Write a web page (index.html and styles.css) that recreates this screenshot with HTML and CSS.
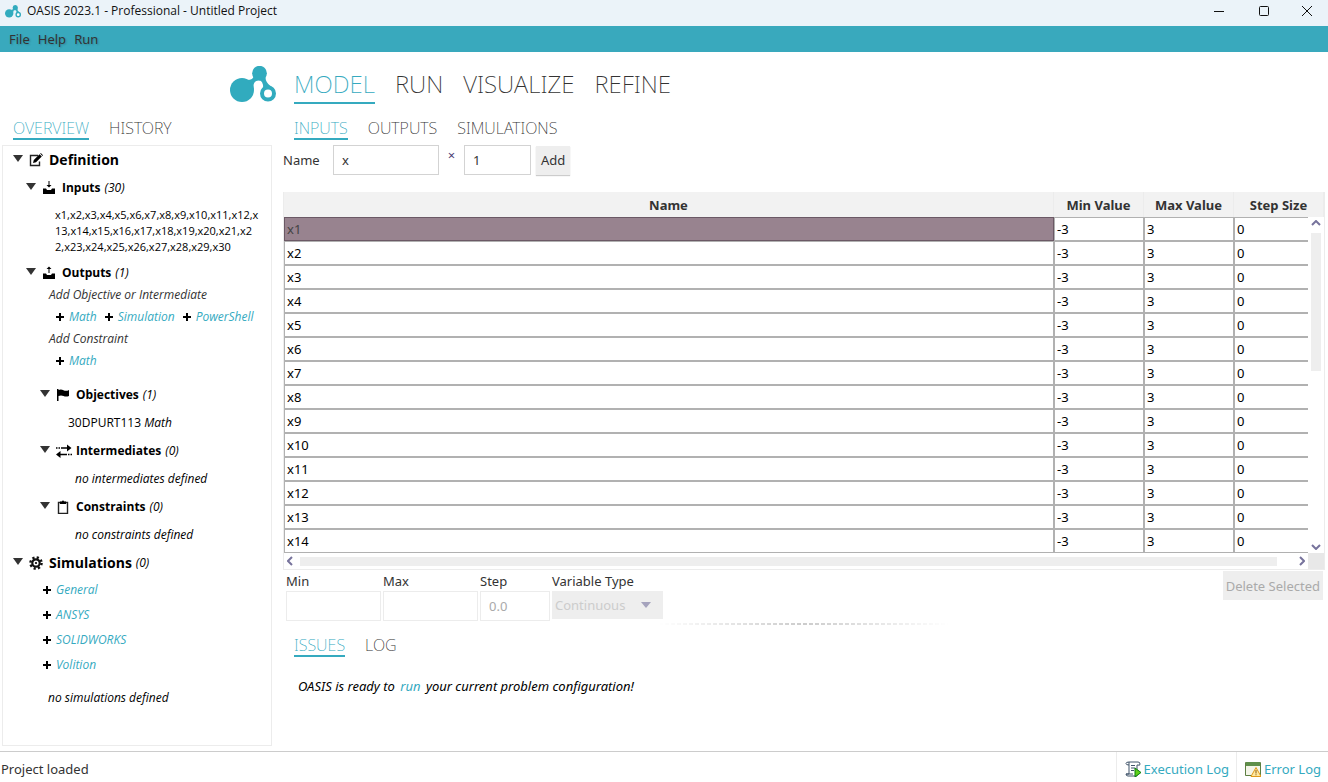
FILE: index.html
```html
<!DOCTYPE html>
<html lang="en">
<head>
  <meta charset="UTF-8">
  <title>OASIS 2023.1 - Professional - Untitled Project</title>
  <meta name="viewport" content="width=device-width, initial-scale=1.0">
  <link rel="stylesheet" href="styles.css">
</head>
<body>
  <svg class="defs" aria-hidden="true">
    <symbol id="logo" viewBox="0 0 46 37">
      <circle cx="12" cy="24" r="12"/>
      <circle cx="29.500" cy="7.200" r="7.400"/>
      <path d="M17 14 Q23.500 14 23.500 10 L35.500 10 Q35 16 41 20.500 L33 25 Q34 14 28.500 14.200 Q23 15 23.500 22z"/>
      <circle cx="38" cy="27.500" r="6" fill="#fff" stroke="currentColor" stroke-width="4"/>
    </symbol>
    <symbol id="plus" viewBox="0 0 8 8">
      <path d="M3 0h2v3h3v2H5v3H3V5H0V3h3z"/>
    </symbol>
  </svg>

  <div class="titlebar">
    <svg class="app-icon"><use href="#logo"/></svg>
    <span class="title">OASIS 2023.1 - Professional - Untitled Project</span>
    <button aria-label="Minimize"><svg viewBox="0 0 12 12"><path d="M1 6.500h10"/></svg></button>
    <button aria-label="Maximize"><svg viewBox="0 0 12 12"><rect x="1.500" y="1.500" width="9" height="9" rx="1"/></svg></button>
    <button aria-label="Close"><svg viewBox="0 0 12 12"><path d="M1 1l10 10M11 1L1 11"/></svg></button>
  </div>

  <nav class="menubar">
    <button>File</button>
    <button>Help</button>
    <button>Run</button>
  </nav>

  <header>
    <svg class="logo"><use href="#logo"/></svg>
    <nav class="steps">
      <a href="#model" class="active">MODEL</a>
      <a href="#run">RUN</a>
      <a href="#visualize">VISUALIZE</a>
      <a href="#refine">REFINE</a>
    </nav>
  </header>

  <div class="workspace">
    <aside>
      <nav class="tabs">
        <a href="#overview" class="active">OVERVIEW</a>
        <a href="#history">HISTORY</a>
      </nav>
      <div class="tree">
        <details open>
          <summary class="top">
            <svg viewBox="0 0 14 14"><path d="M9 2.500H1.500v10h9V8.500" fill="none" stroke="#222" stroke-width="1.400"/><path d="M4 10l.8-3L10.500 1.200l2.300 2.300L7 9.200zM11.200.6l.6-.5 2.200 2.200-.6.6z"/></svg>
            <b>Definition</b>
          </summary>
          <details class="level2" open>
            <summary>
              <svg viewBox="0 0 14 14"><path d="M6.500 0h1v4h2L7 6.500 4.500 4h2zM1 7.500h3l1 1.500h4l1-1.500h3V13H1z"/></svg>
              <b>Inputs</b> <i>(30)</i>
            </summary>
            <p class="vars">x1,x2,x3,x4,x5,x6,x7,x8,x9,x10,x11,x12,x<br>13,x14,x15,x16,x17,x18,x19,x20,x21,x2<br>2,x23,x24,x25,x26,x27,x28,x29,x30</p>
          </details>
          <details class="level2" open>
            <summary>
              <svg viewBox="0 0 14 14"><path d="M6.500 7h1V3h2L7 .5 4.500 3h2zM1 7.500h3l1 1.500h4l1-1.500h3V13H1z"/></svg>
              <b>Outputs</b> <i>(1)</i>
            </summary>
            <div class="add">
              <p>Add Objective or Intermediate</p>
              <div class="add-links">
                <a href="#"><svg><use href="#plus"/></svg>Math</a>
                <a href="#"><svg><use href="#plus"/></svg>Simulation</a>
                <a href="#"><svg><use href="#plus"/></svg>PowerShell</a>
              </div>
              <p>Add Constraint</p>
              <div class="add-links">
                <a href="#"><svg><use href="#plus"/></svg>Math</a>
              </div>
            </div>
            <details class="level3" open>
              <summary>
                <svg viewBox="0 0 14 14"><path d="M1 1h1.500v1Q5 .8 7.500 2.200T13 2v6Q10 9.200 7.500 8T2.500 8v5H1z"/></svg>
                <b>Objectives</b> <i>(1)</i>
              </summary>
              <p class="objective">30DPURT113 <i>Math</i></p>
            </details>
            <details class="level3" open>
              <summary>
                <svg class="wide" viewBox="0 0 16 14"><path d="M5 3.200h6V.5L15.500 4 11 7.500V4.800H5zM0 3.200h1.500v1.600H0zM2.500 3.200H4v1.600H2.500zM11 9.700H4.500V7L0 10.500 4.500 14v-2.700H11zM12 9.700h1.500v1.600H12zM14.500 9.700H16v1.600h-1.500z"/></svg>
                <b>Intermediates</b> <i>(0)</i>
              </summary>
              <p class="none">no intermediates defined</p>
            </details>
            <details class="level3" open>
              <summary>
                <svg viewBox="0 0 14 14"><path d="M2.500 2.500h9v11h-9z" fill="none" stroke="#222" stroke-width="1.400"/><path d="M4 1.500h2a1 1 0 0 1 2 0h2V4H4z"/></svg>
                <b>Constraints</b> <i>(0)</i>
              </summary>
              <p class="none">no constraints defined</p>
            </details>
          </details>
        </details>
        <details open>
          <summary class="top">
            <svg viewBox="0 0 14 14"><circle cx="7" cy="7" r="5.600" fill="none" stroke="#111" stroke-width="2.400" stroke-dasharray="2.200 2.200"/><circle cx="7" cy="7" r="3.700" fill="none" stroke="#111" stroke-width="2.200"/><circle cx="7" cy="7" r="1.100"/></svg>
            <b>Simulations</b> <i>(0)</i>
          </summary>
          <ul class="simulations">
            <li><a href="#"><svg><use href="#plus"/></svg>General</a></li>
            <li><a href="#"><svg><use href="#plus"/></svg>ANSYS</a></li>
            <li><a href="#"><svg><use href="#plus"/></svg>SOLIDWORKS</a></li>
            <li><a href="#"><svg><use href="#plus"/></svg>Volition</a></li>
          </ul>
          <p class="no-sims">no simulations defined</p>
        </details>
      </div>
    </aside>

    <main>
      <nav class="tabs">
        <a href="#inputs" class="active">INPUTS</a>
        <a href="#outputs">OUTPUTS</a>
        <a href="#simulations">SIMULATIONS</a>
      </nav>

      <form class="add-form">
        <label for="name">Name</label>
        <input type="text" id="name" value="x">
        <span class="times">×</span>
        <input type="text" id="count" value="1" aria-label="Count">
        <button type="button">Add</button>
      </form>

      <div class="table-wrap">
        <table>
          <thead>
            <tr><th>Name</th><th>Min Value</th><th>Max Value</th><th>Step Size</th></tr>
          </thead>
          <tbody>
            <tr><td class="selected">x1</td><td>-3</td><td>3</td><td>0</td></tr>
            <tr><td>x2</td><td>-3</td><td>3</td><td>0</td></tr>
            <tr><td>x3</td><td>-3</td><td>3</td><td>0</td></tr>
            <tr><td>x4</td><td>-3</td><td>3</td><td>0</td></tr>
            <tr><td>x5</td><td>-3</td><td>3</td><td>0</td></tr>
            <tr><td>x6</td><td>-3</td><td>3</td><td>0</td></tr>
            <tr><td>x7</td><td>-3</td><td>3</td><td>0</td></tr>
            <tr><td>x8</td><td>-3</td><td>3</td><td>0</td></tr>
            <tr><td>x9</td><td>-3</td><td>3</td><td>0</td></tr>
            <tr><td>x10</td><td>-3</td><td>3</td><td>0</td></tr>
            <tr><td>x11</td><td>-3</td><td>3</td><td>0</td></tr>
            <tr><td>x12</td><td>-3</td><td>3</td><td>0</td></tr>
            <tr><td>x13</td><td>-3</td><td>3</td><td>0</td></tr>
            <tr><td>x14</td><td>-3</td><td>3</td><td>0</td></tr>
          </tbody>
        </table>
        <div class="scroll-y">
          <svg viewBox="0 0 10 6"><path d="M1 5l4-4 4 4"/></svg>
          <span class="thumb"></span>
          <svg viewBox="0 0 10 6"><path d="M1 1l4 4 4-4"/></svg>
        </div>
        <div class="scroll-x">
          <svg viewBox="0 0 6 10"><path d="M5 1L1 5l4 4"/></svg>
          <span class="thumb"></span>
          <svg viewBox="0 0 6 10"><path d="M1 1l4 4-4 4"/></svg>
          <span class="corner"></span>
        </div>
      </div>

      <form class="edit-form">
        <div class="field">
          <label for="min">Min</label>
          <input type="text" id="min" disabled>
        </div>
        <div class="field">
          <label for="max">Max</label>
          <input type="text" id="max" disabled>
        </div>
        <div class="field step">
          <label for="step">Step</label>
          <input type="text" id="step" value="0.0" disabled>
        </div>
        <div class="field type">
          <label for="type">Variable Type</label>
          <div class="select">
            <select id="type" disabled><option>Continuous</option></select>
            <svg viewBox="0 0 10 6"><path d="M0 0h10L5 6z"/></svg>
          </div>
        </div>
        <button type="button" disabled>Delete Selected</button>
      </form>

      <div class="divider"></div>

      <nav class="tabs bottom">
        <a href="#issues" class="active">ISSUES</a>
        <a href="#log">LOG</a>
      </nav>
      <p class="message">OASIS is ready to <a href="#run">run</a> your current problem configuration!</p>
    </main>
  </div>

  <footer>
    <span class="status">Project loaded</span>
    <a href="#execution-log">
      <svg viewBox="0 0 16 16"><path d="M4 1h9q2 0 2 2t-2 1H12v11H3q-2 0-2-2h3z" fill="#fff" stroke="#40546a"/><path d="M4 4q-3 0-3-1.500T4 1M6 4.500h4M6 7h4M6 9.500h3M1 13h7" fill="none" stroke="#40546a"/><path d="M10 7l6 4.500-6 4.500z" fill="#5fd018" stroke="#0b7d10"/></svg>
      Execution Log
    </a>
    <a href="#error-log">
      <svg viewBox="0 0 16 16"><path d="M.5 1.500h15v13H.5z" fill="#f4f5e8" stroke="#5d7f42"/><path d="M1 1h14v4H1z" fill="#5f8f4a"/><path d="M11 6.500l5 9H6z" fill="#ffe9a0" stroke="#e09a1c"/><path d="M10.500 9h1v3.500h-1zM10.500 13.300h1v1h-1z" fill="#8a5a10"/></svg>
      Error Log
    </a>
  </footer>
</body>
</html>
```
FILE: styles.css
```css
* {
  box-sizing: border-box;
}
body {
  font-family: "Noto Sans", "Open Sans", sans-serif;
  font-size: 13px;
  line-height: 18px;
  color: #333;
  background: #fff;
  margin: 0;
  min-height: 100vh;
  display: flex;
  flex-direction: column;
}
a {
  color: #35aabf;
  text-decoration: none;
}
p, ul {
  margin: 0;
  padding: 0;
  list-style: none;
}
button, input, select {
  font: inherit;
  color: inherit;
  margin: 0;
}
.defs {
  position: absolute;
  width: 0;
  height: 0;
}
.titlebar {
  height: 26px;
  display: flex;
  align-items: center;
  background: #ebf3f9;
  color: #111;
  font-family: "Open Sans", sans-serif;
  font-size: 12px;
  line-height: 22px;
  padding: 0 0 4px 5px;
}
.titlebar .title {
  flex: 1;
}
.titlebar button {
  width: 45px;
  height: 22px;
  padding: 0;
  border: none;
  background: none;
  display: flex;
  align-items: center;
  justify-content: center;
}
.titlebar button:last-child {
  width: 42px;
}
.titlebar button svg {
  width: 12px;
  height: 12px;
  fill: none;
  stroke: #111;
}
.app-icon, .logo {
  color: #31abbe;
  fill: #31abbe;
}
.app-icon {
  width: 16px;
  height: 13px;
  margin-right: 6px;
}
.menubar {
  height: 26px;
  display: flex;
  align-items: center;
  gap: 8px;
  padding: 0 9px;
  background: #39a9bd;
}
.menubar button {
  border: none;
  background: none;
  padding: 0;
  text-shadow: 1px 1px 2px rgba(0, 0, 0, 0.2);
}
header {
  display: flex;
  gap: 18px;
  padding: 14px 0 0 230px;
  height: 66px;
}
.logo {
  width: 46px;
  height: 37px;
}
.steps, .tabs {
  display: flex;
  align-items: flex-start;
  font-weight: 200;
}
.steps {
  gap: 20px;
  font-size: 24px;
  line-height: 36px;
}
.tabs {
  gap: 20px;
  font-size: 16px;
  line-height: 20px;
  height: 27px;
}
.steps a, .tabs a {
  color: #333;
  border-bottom: 2px solid transparent;
}
.steps a.active, .tabs a.active {
  color: #35aabf;
  border-color: #35aabf;
}
.workspace {
  flex: 1;
  display: flex;
}
aside {
  width: 272px;
  padding: 0 0 5px 2px;
  display: flex;
  flex-direction: column;
}
aside .tabs {
  padding-left: 11px;
}
.tree {
  flex: 1;
  border: 1px solid #ececec;
  font-family: "Open Sans", sans-serif;
  font-size: 12px;
  line-height: 28px;
  color: #000;
}
summary {
  display: flex;
  align-items: center;
  height: 28px;
  white-space: pre;
  cursor: pointer;
}
summary::before {
  content: "";
  border: 5px solid transparent;
  border-top: 7px solid #333;
  border-bottom: none;
  margin: 0 6px 4px 0;
}
summary svg {
  width: 14px;
  height: 14px;
  margin-right: 6px;
}
summary svg.wide {
  width: 16px;
  margin: 0 4px 0 0;
}
summary i {
  margin-left: 4px;
}
summary.top {
  padding-left: 10px;
}
summary.top b {
  font-size: 14px;
}
.level2 > summary {
  padding-left: 23px;
}
.level3 > summary {
  padding-left: 37px;
}
.vars {
  font-size: 11px;
  line-height: 16px;
  padding: 5px 0 4px 52px;
  white-space: nowrap;
}
.add {
  margin: -3px 0 9px 46px;
  line-height: 22px;
  font-style: italic;
  color: #333;
}
.add-links {
  display: flex;
  gap: 8px;
  padding-left: 7px;
}
.add-links a, .simulations a {
  display: flex;
  align-items: center;
  gap: 5px;
}
.add-links svg, .simulations svg {
  width: 8px;
  height: 8px;
  fill: #000;
}
.objective {
  padding-left: 65px;
}
.none {
  padding-left: 72px;
  font-style: italic;
}
.simulations {
  padding-left: 40px;
  line-height: 25px;
  font-style: italic;
}
.no-sims {
  margin-top: 7px;
  padding-left: 45px;
  font-style: italic;
}
main {
  flex: 1;
  min-width: 0;
  padding: 0 3px 0 11px;
}
main .tabs {
  padding-left: 11px;
}
.add-form {
  display: flex;
  align-items: center;
  height: 30px;
}
.add-form label {
  width: 50px;
}
input {
  width: 100%;
  height: 30px;
  padding: 0 8px;
  border: 1px solid #d3d3d3;
  background: #fff;
}
#name {
  width: 106px;
}
#count {
  width: 67px;
  margin-right: 5px;
}
.times {
  width: 25px;
  line-height: 20px;
  align-self: flex-start;
  text-align: center;
  color: #4b3d75;
}
.add-form button, .edit-form button {
  height: 29px;
  padding: 0 5px;
  border: none;
  background: #eee;
  box-shadow: 0 1px 1px #ccc;
}
.table-wrap {
  position: relative;
  margin-top: 17px;
  padding-bottom: 16px;
  border: 1px solid #ececec;
  border-top: none;
}
table {
  width: 100%;
  table-layout: fixed;
  border-collapse: separate;
  border-spacing: 0;
  color: #000;
}
th {
  width: 90px;
  height: 25px;
  padding: 0;
  background: #f2f2f2;
  border-right: 1px solid #ececec;
  color: #333;
}
th:first-child {
  width: auto;
}
td {
  height: 24px;
  padding: 0 2px;
  border: 1px solid #b1b1b1;
}
td.selected {
  background: #98838f;
  border-color: #6b5965;
  color: #444;
}
.scroll-y, .scroll-x {
  position: absolute;
  display: flex;
  align-items: center;
  background: #fff;
}
.scroll-y {
  top: 25px;
  right: 0;
  bottom: 16px;
  width: 16px;
  flex-direction: column;
  padding: 3px 0;
}
.scroll-x {
  left: 0;
  right: 0;
  bottom: 0;
  height: 16px;
  padding-left: 3px;
}
.scroll-y svg, .scroll-x svg {
  fill: none;
  stroke: #77739c;
  stroke-width: 2;
}
.scroll-y svg {
  width: 10px;
  height: 6px;
}
.scroll-x svg {
  width: 6px;
  height: 10px;
}
.thumb {
  background: #eee;
}
.scroll-y .thumb {
  width: 10px;
  height: 138px;
  margin: 7px 0 auto;
}
.scroll-x .thumb {
  flex: 1;
  height: 9px;
  margin: 0 22px 0 7px;
}
.corner {
  width: 16px;
  height: 16px;
  margin-left: 3px;
  background: #e8e8e8;
}
.edit-form {
  display: flex;
  gap: 2px;
  padding: 1px 2px 0 3px;
}
.field {
  width: 95px;
}
.field.step {
  width: 70px;
}
.field.type {
  width: 111px;
}
.field label {
  display: block;
  line-height: 20px;
}
.field input {
  border-color: #ececec;
  color: #aaa;
}
.select {
  position: relative;
}
.select select {
  width: 100%;
  height: 28px;
  padding: 0 3px;
  border: none;
  appearance: none;
  background: #eee;
  color: #ccc;
  opacity: 1;
}
.select svg {
  position: absolute;
  right: 12px;
  top: 11px;
  width: 10px;
  height: 6px;
  fill: #a5a3bd;
}
.edit-form button {
  margin-left: auto;
  padding: 0 3px;
  color: #aaa;
  box-shadow: none;
}
.divider {
  width: 290px;
  height: 2px;
  margin: 2px auto 10px;
  background: repeating-linear-gradient(90deg, #ccc 0 4px, #fff 4px 6px);
  mask-image: linear-gradient(90deg, transparent, #000, transparent);
}
.message {
  padding: 15px 0 0 15px;
  color: #000;
  font-style: italic;
}
.message a {
  margin: 0 2px;
}
footer {
  display: flex;
  height: 31px;
  border-top: 1px solid #ccc;
}
.status {
  flex: 1;
  padding: 8px 1px 0;
}
footer a {
  display: flex;
  align-items: center;
  gap: 3px;
  padding: 4px 7px 0 8px;
  line-height: 20px;
  border-left: 1px solid #ececec;
}
footer svg {
  width: 16px;
  height: 16px;
}
```
